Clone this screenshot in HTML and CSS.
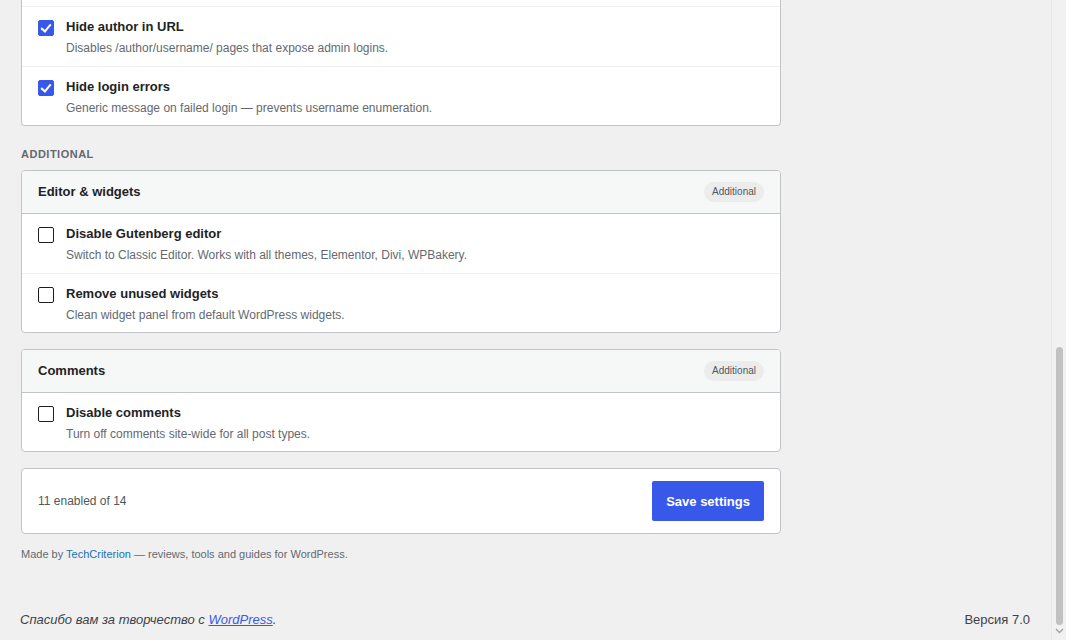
FILE: index.html
```html
<!DOCTYPE html>
<html lang="ru">
<head>
<meta charset="UTF-8" />
<meta name="viewport" content="width=device-width, initial-scale=1" />
<title>Настройки</title>
<link rel="stylesheet" href="styles.css">
</head>
<body>
  <div id="screen">
    <div id="wpbody">
      <main id="content">
        <!-- Tarjeta de seguridad (continúa desde arriba) -->
        <section class="card card-cut">
          <div class="option">
            <span class="check checked"></span>
            <div class="option-text">
              <div class="option-title">Hide author in URL</div>
              <div class="option-desc">Disables /author/username/ pages that expose admin logins.</div>
            </div>
          </div>
          <div class="option">
            <span class="check checked"></span>
            <div class="option-text">
              <div class="option-title">Hide login errors</div>
              <div class="option-desc">Generic message on failed login — prevents username enumeration.</div>
            </div>
          </div>
        </section>

        <h3 class="group-label">Additional</h3>

        <section class="card">
          <header class="card-head">
            <span class="card-title">Editor &amp; widgets</span>
            <span class="badge">Additional</span>
          </header>
          <div class="option">
            <span class="check"></span>
            <div class="option-text">
              <div class="option-title">Disable Gutenberg editor</div>
              <div class="option-desc">Switch to Classic Editor. Works with all themes, Elementor, Divi, WPBakery.</div>
            </div>
          </div>
          <div class="option">
            <span class="check"></span>
            <div class="option-text">
              <div class="option-title">Remove unused widgets</div>
              <div class="option-desc">Clean widget panel from default WordPress widgets.</div>
            </div>
          </div>
        </section>

        <section class="card">
          <header class="card-head">
            <span class="card-title">Comments</span>
            <span class="badge">Additional</span>
          </header>
          <div class="option">
            <span class="check"></span>
            <div class="option-text">
              <div class="option-title">Disable comments</div>
              <div class="option-desc">Turn off comments site-wide for all post types.</div>
            </div>
          </div>
        </section>

        <section class="card save-bar">
          <span class="counter">11 enabled of 14</span>
          <button class="btn-save">Save settings</button>
        </section>

        <p class="credits">Made by <a href="#">TechCriterion</a> — reviews, tools and guides for WordPress.</p>
      </main>

      <footer id="wpfooter">
        <span class="thanks">Спасибо вам за творчество с <a href="#">WordPress</a>.</span>
        <span class="version">Версия 7.0</span>
      </footer>
    </div>

    <!-- Barra de desplazamiento -->
    <div id="scrollbar">
      <div class="thumb"></div>
      <svg class="arrow" width="9" height="6" viewBox="0 0 9 6"><path d="M1 1l3.5 3.5L8 1" fill="none" stroke="#a3a3a3" stroke-width="1.4"/></svg>
    </div>
  </div>
</body>
</html>
```

FILE: styles.css
```css
html, body {
  margin: 0;
  padding: 0;
  height: 100%;
  overflow: hidden;
  background: #f0f0f1;
  font-family: "Segoe UI", "Liberation Sans", Arial, sans-serif;
  color: #1d2327;
}
#screen {
  display: flex;
  height: 640px;
}
#wpbody {
  flex: 1;
  display: flex;
  flex-direction: column;
  min-width: 0;
  overflow: hidden;
}
#content {
  padding: 0 0 0 21px;
  width: 760px;
}
/* Tarjetas */
.card {
  background: #fff;
  border: 1px solid #c3c4c7;
  border-radius: 4px;
  margin-bottom: 16px;
  overflow: hidden;
}
.card-cut {
  border-top: none;
  border-radius: 0 0 4px 4px;
  padding-top: 6px;
  margin-bottom: 0;
}
.card-head {
  display: flex;
  justify-content: space-between;
  align-items: center;
  padding: 11px 16px;
  background: #f6f7f7;
  border-bottom: 1px solid #c3c4c7;
}
.card-title {
  font-size: 13px;
  line-height: 18px;
  font-weight: 600;
}
.badge {
  font-size: 10px;
  line-height: 14px;
  padding: 3px 8px;
  border-radius: 10px;
  background: #ececec;
  color: #50575e;
}
.group-label {
  margin: 20px 0 8px;
  font-size: 11px;
  line-height: 16px;
  font-weight: 600;
  letter-spacing: 0.5px;
  text-transform: uppercase;
  color: #646970;
}
/* Opciones */
.option {
  display: flex;
  gap: 12px;
  padding: 11px 16px 9px;
  border-top: 1px solid #f0f0f1;
}
.option:last-child {
  padding-bottom: 8px;
}
.card-head + .option {
  border-top: none;
}
.check {
  flex: none;
  width: 14px;
  height: 14px;
  margin-top: 2px;
  border: 1px solid #1e1e1e;
  border-radius: 2px;
  background: #fff;
  position: relative;
}
.check.checked {
  background: #3858e9;
  border-color: #3858e9;
}
.check.checked::after {
  content: "";
  position: absolute;
  left: 4px;
  top: 1px;
  width: 4px;
  height: 8px;
  border: solid #fff;
  border-width: 0 2px 2px 0;
  transform: rotate(40deg);
}
.option-title {
  font-size: 13px;
  line-height: 18px;
  font-weight: 600;
}
.option-desc {
  margin-top: 3px;
  font-size: 12px;
  line-height: 18px;
  color: #646970;
}
/* Barra de guardado */
.save-bar {
  display: flex;
  justify-content: space-between;
  align-items: center;
  padding: 12px 16px;
  margin-bottom: 0;
}
.counter {
  font-size: 12px;
  color: #50575e;
}
.btn-save {
  height: 40px;
  padding: 0 14px;
  background: #3858e9;
  color: #fff;
  border: none;
  border-radius: 2px;
  font-family: inherit;
  font-size: 13px;
  font-weight: 600;
  cursor: pointer;
}
.btn-save:hover {
  background: #2145e6;
}
.credits {
  margin: 12px 0 0;
  font-size: 11px;
  line-height: 16px;
  color: #646970;
}
.credits a {
  color: #2271b1;
  text-decoration: none;
}
/* Pie de WordPress */
#wpfooter {
  margin-top: auto;
  display: flex;
  justify-content: space-between;
  padding: 0 21px 10px 20px;
  font-size: 13px;
  line-height: 20px;
  color: #3c434a;
}
.thanks {
  font-style: italic;
}
.thanks a {
  color: #3858e9;
}
/* Scrollbar */
#scrollbar {
  flex: none;
  width: 15px;
  background: #f1f1f1;
  border-left: 1px solid #e8e8e8;
  box-sizing: border-box;
  display: flex;
  flex-direction: column;
  align-items: center;
  padding-top: 347px;
}
#scrollbar .thumb {
  width: 7px;
  height: 278px;
  border-radius: 4px;
  background: #c1c1c1;
}
#scrollbar .arrow {
  margin-top: 3px;
}
```
